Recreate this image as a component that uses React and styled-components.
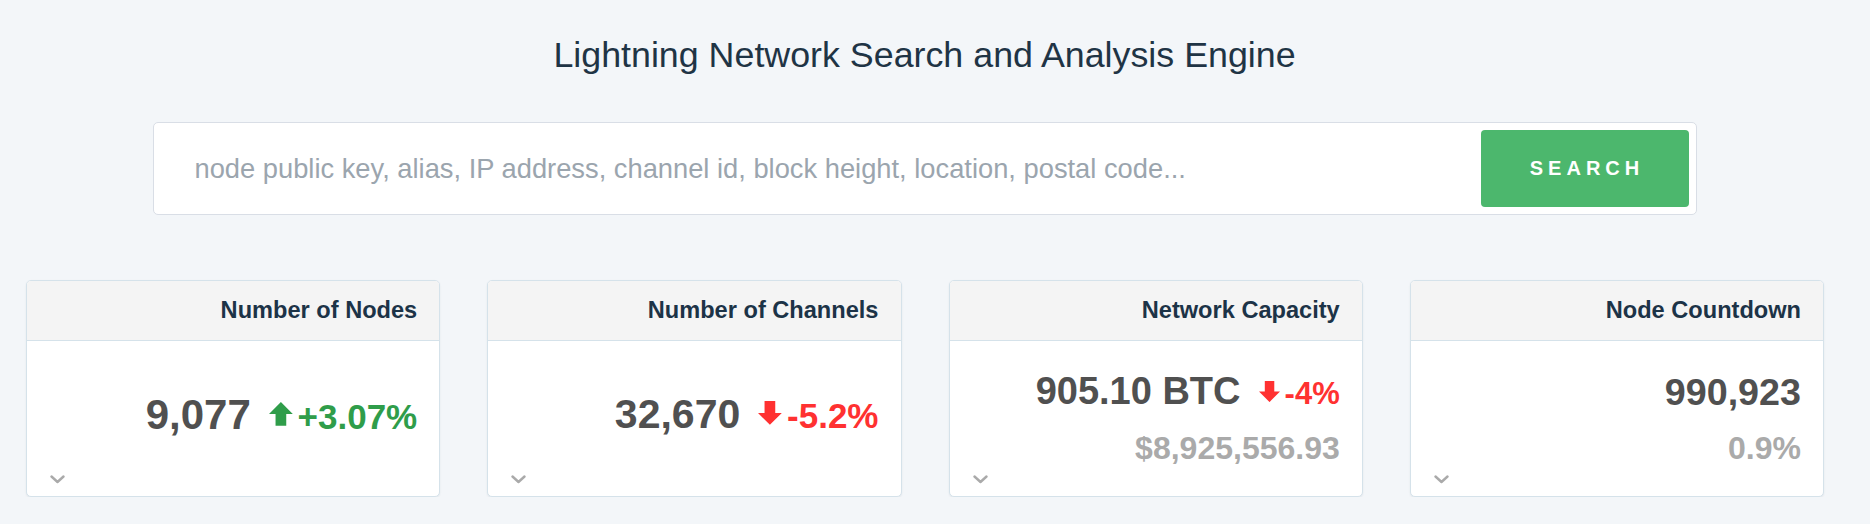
import React from "react";
import styled, { createGlobalStyle } from "styled-components";

const GlobalStyle = createGlobalStyle`
  body {
    margin: 0;
    background: #f3f6f9;
    font-family: "Liberation Sans", Arial, sans-serif;
  }
`;

const stats = [
  { title: "Number of Nodes", value: "9,077", size: 42, change: { dir: "up", text: "+3.07%", size: 35 } },
  { title: "Number of Channels", value: "32,670", size: 41, change: { dir: "down", text: "-5.2%", size: 35 } },
  { title: "Network Capacity", value: "905.10 BTC", size: 38, change: { dir: "down", text: "-4%", size: 31 }, sub: "$8,925,556.93" },
  { title: "Node Countdown", value: "990,923", size: 37.7, sub: "0.9%" },
];

const Arrow = ({ dir }) => (
  <ArrowIcon viewBox="0 0 20 22" preserveAspectRatio="none">
    {dir === "up" ? (
      <polygon points="10,0 20,11 14.5,11 14.5,22 5.5,22 5.5,11 0,11" />
    ) : (
      <polygon points="10,22 20,11 14.5,11 14.5,0 5.5,0 5.5,11 0,11" />
    )}
  </ArrowIcon>
);

const Chevron = () => (
  <Toggle viewBox="0 0 15 9" aria-hidden="true">
    <polyline points="1.5,1.5 7.5,7 13.5,1.5" />
  </Toggle>
);

const StatCard = ({ stat }) => (
  <Card>
    <CardHeader>{stat.title}</CardHeader>
    <CardBody $stacked={!!stat.sub}>
      <MainLine $size={stat.size}>
        <span>{stat.value}</span>
        {stat.change && (
          <Change $dir={stat.change.dir} $size={stat.change.size}>
            <Arrow dir={stat.change.dir} />
            {stat.change.text}
          </Change>
        )}
      </MainLine>
      {stat.sub && <SubLine>{stat.sub}</SubLine>}
      <Chevron />
    </CardBody>
  </Card>
);

const App = () => {
  return (
    <Page>
      <GlobalStyle />
      <Title>Lightning Network Search and Analysis Engine</Title>
      <SearchBox>
        <SearchInput placeholder="node public key, alias, IP address, channel id, block height, location, postal code..." />
        <SearchButton>SEARCH</SearchButton>
      </SearchBox>
      <CardRow>
        {stats.map((s) => (
          <StatCard key={s.title} stat={s} />
        ))}
      </CardRow>
    </Page>
  );
};

const Page = styled.div`
  width: 1849px;
  padding-top: 35px;
`;

const Title = styled.h1`
  margin: 0;
  text-align: center;
  font-size: 35.8px;
  font-weight: 400;
  line-height: 1.15;
  color: #1f3445;
`;

const SearchBox = styled.div`
  box-sizing: border-box;
  width: 1544px;
  height: 93px;
  margin: 46px auto 0;
  padding: 7px;
  display: flex;
  align-items: stretch;
  background: #fff;
  border: 1px solid #d9dee6;
  border-radius: 5px;
`;

const SearchInput = styled.input`
  flex: 1;
  border: none;
  outline: none;
  background: transparent;
  padding: 0 0 0 34px;
  font-family: "Liberation Sans", Arial, sans-serif;
  font-size: 27.3px;
  color: #333;
  &::placeholder {
    color: #9ba5ae;
  }
`;

const SearchButton = styled.button`
  width: 208px;
  border: none;
  border-radius: 4px;
  background: #4cb76d;
  color: #fff;
  font-family: "Liberation Sans", Arial, sans-serif;
  font-size: 20px;
  font-weight: 700;
  letter-spacing: 5px;
  padding: 0 0 0 5px;
  cursor: pointer;
`;

const CardRow = styled.div`
  display: grid;
  grid-template-columns: repeat(4, 1fr);
  gap: 47px;
  padding: 0 25px 0 26px;
  margin-top: 65px;
`;

const Card = styled.div`
  background: #fff;
  border: 1px solid #d5e2ea;
  border-radius: 5px;
  overflow: hidden;
  box-shadow: 0 1px 2px rgba(40, 60, 80, 0.08);
`;

const CardHeader = styled.div`
  height: 59px;
  display: flex;
  align-items: center;
  justify-content: flex-end;
  padding: 0 22px;
  background: #f4f4f4;
  border-bottom: 1px solid #d5e2ea;
  font-size: 23.6px;
  font-weight: 700;
  color: #1c3347;
`;

const CardBody = styled.div`
  position: relative;
  box-sizing: border-box;
  height: 155px;
  display: flex;
  flex-direction: column;
  justify-content: center;
  align-items: flex-end;
  padding: 0 22px ${(p) => (p.$stacked ? 0 : 8)}px;
`;

const MainLine = styled.div`
  font-size: ${(p) => p.$size}px;
  line-height: 1.15;
  font-weight: 700;
  color: #505050;
  white-space: nowrap;
`;

const Change = styled.span`
  margin-left: 18px;
  font-size: ${(p) => p.$size}px;
  color: ${(p) => (p.$dir === "up" ? "#2f9d4a" : "#ff3131")};
`;

const ArrowIcon = styled.svg`
  width: 0.68em;
  height: 0.68em;
  margin-right: 5px;
  vertical-align: 0.08em;
  fill: currentColor;
`;

const SubLine = styled.div`
  margin-top: 16px;
  font-size: 32px;
  line-height: 1.15;
  font-weight: 700;
  color: #aaaaaa;
`;

const Toggle = styled.svg`
  position: absolute;
  left: 23px;
  bottom: 12px;
  width: 15px;
  height: 9px;
  fill: none;
  stroke: #aaaaaa;
  stroke-width: 2.4;
  stroke-linecap: round;
  stroke-linejoin: round;
`;

export default App;
